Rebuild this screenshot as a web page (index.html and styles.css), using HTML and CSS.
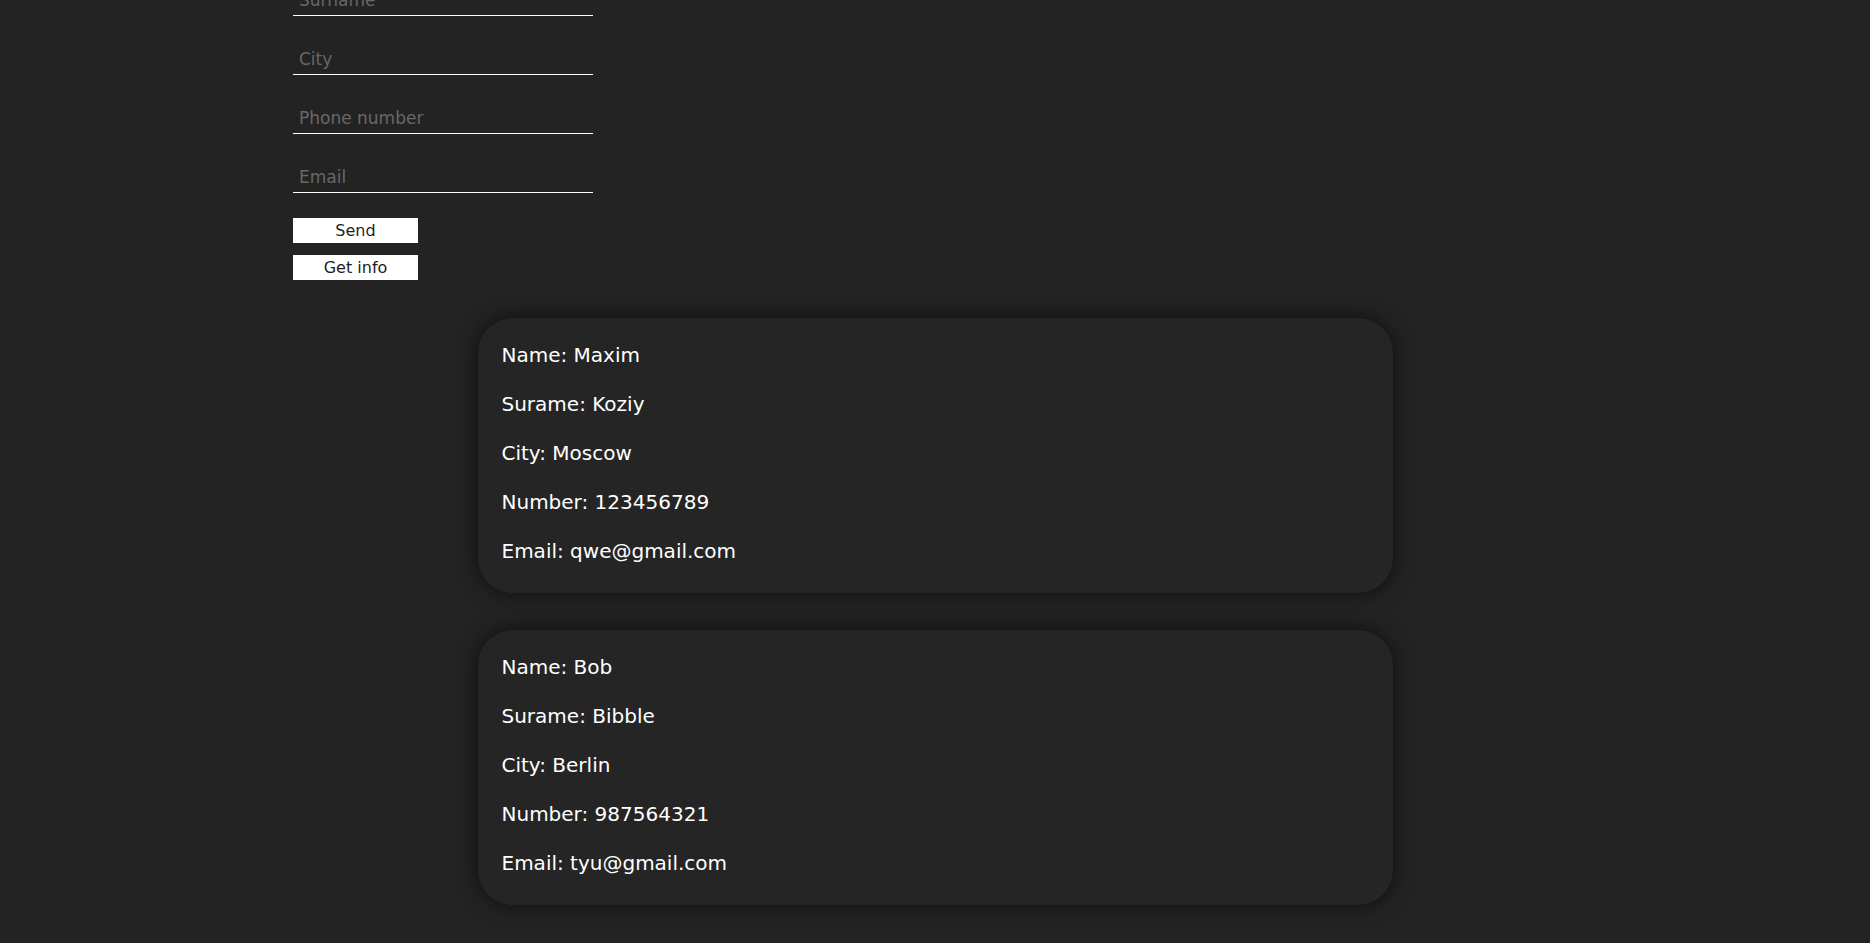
FILE: index.html
```html
<!DOCTYPE html>
<html lang="en">
<head>
<meta charset="utf-8">
<title>Contacts</title>
<link rel="stylesheet" href="styles.css">
</head>
<body>
<form class="form">
  <input class="field" type="text" placeholder="Name">
  <input class="field" type="text" placeholder="Surname">
  <input class="field" type="text" placeholder="City">
  <input class="field" type="text" placeholder="Phone number">
  <input class="field" type="text" placeholder="Email">
  <button class="btn btn-send" type="button">Send</button>
  <button class="btn btn-info" type="button">Get info</button>
</form>
<main class="list">
  <section class="card">
    <p class="row">Name: Maxim</p>
    <p class="row">Surame: Koziy</p>
    <p class="row">City: Moscow</p>
    <p class="row">Number: 123456789</p>
    <p class="row">Email: qwe@gmail.com</p>
  </section>
  <section class="card">
    <p class="row">Name: Bob</p>
    <p class="row">Surame: Bibble</p>
    <p class="row">City: Berlin</p>
    <p class="row">Number: 987564321</p>
    <p class="row">Email: tyu@gmail.com</p>
  </section>
</main>
</body>
</html>
```
FILE: styles.css
```css
html, body {
  margin: 0;
  padding: 0;
  background: #232323;
  font-family: "DejaVu Sans", "Liberation Sans", sans-serif;
  color: #ffffff;
}

.form {
  display: flex;
  flex-direction: column;
  align-items: flex-start;
  width: 300px;
  margin: -75px 0 0 293px;
}

.field {
  box-sizing: border-box;
  width: 300px;
  height: 32px;
  margin: 27px 0 0 0;
  padding: 0 6px;
  border: none;
  border-bottom: 1px solid #ffffff;
  background: transparent;
  color: #ffffff;
  font-family: "DejaVu Sans", "Liberation Sans", sans-serif;
  font-size: 17px;
  outline: none;
}

.field:first-child {
  margin-top: 0;
}

.field::placeholder {
  color: #686868;
}

.btn {
  box-sizing: border-box;
  width: 125px;
  height: 25px;
  padding: 0;
  border: none;
  background: #ffffff;
  color: #1e1e1e;
  font-family: "DejaVu Sans", "Liberation Sans", sans-serif;
  font-size: 16px;
  line-height: 25px;
  text-align: center;
}

.btn-send {
  margin-top: 25px;
}

.btn-info {
  margin-top: 12px;
}

.list {
  display: flex;
  flex-direction: column;
  align-items: center;
  gap: 37px;
  margin-top: 38px;
  padding-bottom: 40px;
}

.card {
  box-sizing: border-box;
  width: 915px;
  padding: 3px 24px 7px;
  background: #252525;
  border-radius: 35px;
  box-shadow: 0 0 20px rgba(0, 0, 0, 0.62);
}

.row {
  margin: 20px 0;
  font-size: 20px;
  line-height: 29px;
  color: #ffffff;
}
```
